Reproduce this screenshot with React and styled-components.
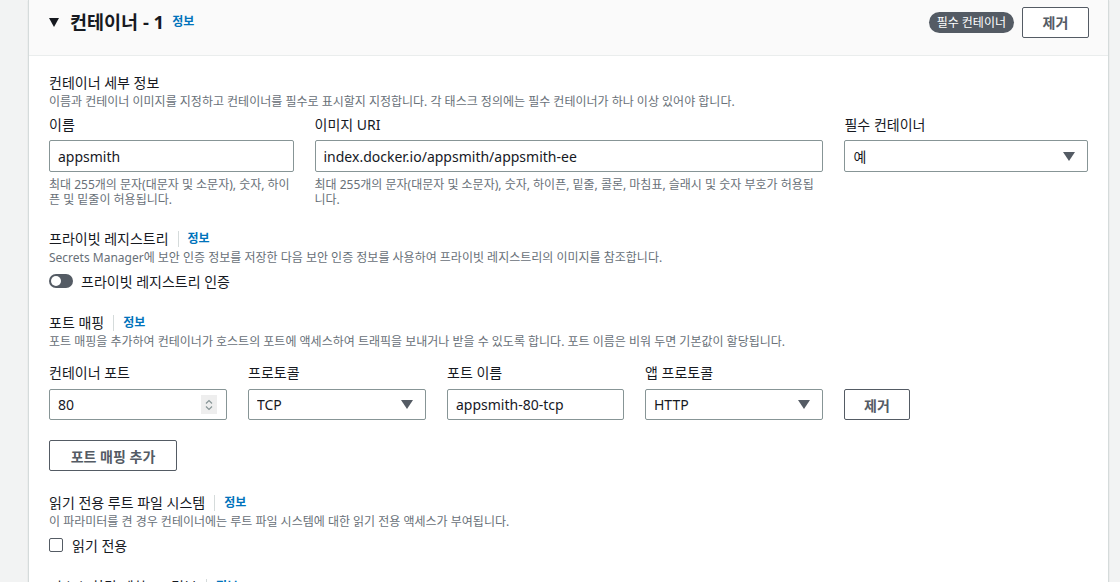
import React from "react";
import styled, { createGlobalStyle } from "styled-components";

const Global = createGlobalStyle`
  html, body { margin: 0; padding: 0; }
  body {
    background: #f2f3f3;
    font-family: "Noto Sans", "Noto Sans CJK KR", sans-serif;
    color: #16191f;
    overflow: hidden;
  }
  * { box-sizing: border-box; }
`;

const Page = styled.div`
  width: 1120px;
  height: 582px;
  padding: 0 11px 0 28px;
  overflow: hidden;
`;

const Card = styled.section`
  background: #fff;
  border-left: 1px solid #d5dbdb;
  border-right: 1px solid #d5dbdb;
  box-shadow: 0 1px 1px rgba(0, 28, 36, 0.15);
  min-height: 700px;
`;

const Header = styled.header`
  display: flex;
  align-items: center;
  height: 56px;
  padding: 0 19px 11px 20px;
  background: #fafafa;
  border-bottom: 1px solid #eaeded;
`;

const Caret = styled.span`
  width: 0;
  height: 0;
  border-left: 5px solid transparent;
  border-right: 5px solid transparent;
  border-top: 9px solid #16191f;
  margin-right: 11px;
  margin-top: 1px;
`;

const Title = styled.h2`
  margin: 0;
  font-size: 18.5px;
  font-weight: 700;
  line-height: 22px;
`;

const InfoLink = styled.a`
  color: #0073bb;
  font-size: 12px;
  font-weight: 700;
  text-decoration: none;
  line-height: 16px;
  margin-left: ${(p) => p.$ml || 0}px;
`;

const Spacer = styled.div`
  flex: 1;
`;

const Badge = styled.span`
  background: #545b64;
  color: #fff;
  font-size: 12px;
  line-height: 21px;
  height: 21px;
  padding: 0 8px;
  border-radius: 11px;
  margin-right: 8px;
`;

const Button = styled.button`
  font-family: inherit;
  background: #fff;
  border: 1px solid #545b64;
  border-radius: 2px;
  color: #545b64;
  font-weight: 700;
  font-size: 14px;
  height: ${(p) => p.$h || 31}px;
  width: ${(p) => p.$w}px;
  padding: 0;
  cursor: pointer;
  flex-shrink: 0;
`;

const Body = styled.div`
  padding: 17px 20px 0 20px;
  display: flex;
  flex-direction: column;
  gap: 22px;
`;

const Section = styled.div`
  display: flex;
  flex-direction: column;
`;

const HeadingRow = styled.div`
  display: flex;
  align-items: center;
  height: 20px;
`;

const Heading = styled.h3`
  margin: 0;
  font-size: 14px;
  font-weight: 400;
  line-height: 20px;
`;

const Sep = styled.span`
  width: 1px;
  height: 16px;
  background: #d5dbdb;
  margin: 0 9px 0 9px;
`;

const Desc = styled.p`
  margin: 1px 0 0 0;
  font-size: 12px;
  line-height: 16px;
  color: #687078;
`;

const Grid = styled.div`
  display: grid;
  grid-template-columns: ${(p) => p.$cols};
  column-gap: 21px;
  margin-top: ${(p) => p.$mt || 0}px;
  align-items: ${(p) => p.$align || "end"};
`;

const Field = styled.div`
  display: flex;
  flex-direction: column;
  min-width: 0;
`;

const Label = styled.label`
  font-size: 14px;
  line-height: 20px;
  margin-bottom: ${(p) => p.$mb || 5}px;
`;

const Box = styled.div`
  display: flex;
  align-items: center;
  height: ${(p) => p.$h || 32}px;
  border: 1px solid #879596;
  border-radius: 2px;
  padding: 0 10px 0 8px;
  font-size: 14px;
  background: #fff;
  color: #16191f;
`;

const BoxText = styled.span`
  flex: 1;
  white-space: nowrap;
  overflow: hidden;
`;

const Arrow = styled.span`
  width: 0;
  height: 0;
  border-left: 6px solid transparent;
  border-right: 6px solid transparent;
  border-top: 9px solid #545b64;
  margin-right: 2px;
`;

const Stepper = styled.span`
  width: 16px;
  height: 19px;
  background: #eeeeee;
  display: flex;
  align-items: center;
  justify-content: center;
  margin-right: -1px;
`;

const Help = styled.div`
  font-size: 12px;
  line-height: 15px;
  color: #687078;
  margin-top: 5px;
  min-height: 30px;
`;

const OptionRow = styled.div`
  display: flex;
  align-items: center;
  height: 20px;
  margin-top: 5px;
  gap: 8px;
  font-size: 14px;
`;

const Toggle = styled.span`
  width: 24px;
  height: 14px;
  border-radius: 7px;
  background: #545b64;
  position: relative;
  &::after {
    content: "";
    position: absolute;
    left: 2px;
    top: 2px;
    width: 10px;
    height: 10px;
    border-radius: 50%;
    background: #fff;
  }
`;

const Check = styled.span`
  width: 14px;
  height: 14px;
  border: 1px solid #545b64;
  border-radius: 2px;
  background: #fff;
  margin-right: 1px;
`;

const ButtonRow = styled.div`
  margin-top: 20px;
`;

const Chevrons = () => (
  <svg width="10" height="14" viewBox="0 0 10 14" fill="none" stroke="#879596" strokeWidth="1.2">
    <path d="M2 5.5 L5 2.5 L8 5.5" />
    <path d="M2 8.5 L5 11.5 L8 8.5" />
  </svg>
);

export default function App() {
  return (
    <>
      <Global />
      <Page>
        <Card>
          <Header>
            <Caret />
            <Title>컨테이너 - 1</Title>
            <InfoLink $ml={8}>정보</InfoLink>
            <Spacer />
            <Badge>필수 컨테이너</Badge>
            <Button $w={67} $h={31}>제거</Button>
          </Header>
          <Body>
            <Section>
              <Heading>컨테이너 세부 정보</Heading>
              <Desc>이름과 컨테이너 이미지를 지정하고 컨테이너를 필수로 표시할지 지정합니다. 각 태스크 정의에는 필수 컨테이너가 하나 이상 있어야 합니다.</Desc>
              <Grid $cols="245fr 510fr 244fr" $mt={5} $align="start">
                <Field>
                  <Label>이름</Label>
                  <Box>
                    <BoxText>appsmith</BoxText>
                  </Box>
                  <Help>최대 255개의 문자(대문자 및 소문자), 숫자, 하이픈 및 밑줄이 허용됩니다.</Help>
                </Field>
                <Field>
                  <Label>이미지 URI</Label>
                  <Box>
                    <BoxText>index.docker.io/appsmith/appsmith-ee</BoxText>
                  </Box>
                  <Help>최대 255개의 문자(대문자 및 소문자), 숫자, 하이픈, 밑줄, 콜론, 마침표, 슬래시 및 숫자 부호가 허용됩니다.</Help>
                </Field>
                <Field>
                  <Label>필수 컨테이너</Label>
                  <Box>
                    <BoxText>예</BoxText>
                    <Arrow />
                  </Box>
                </Field>
              </Grid>
            </Section>

            <Section>
              <HeadingRow>
                <Heading>프라이빗 레지스트리</Heading>
                <Sep />
                <InfoLink>정보</InfoLink>
              </HeadingRow>
              <Desc>Secrets Manager에 보안 인증 정보를 저장한 다음 보안 인증 정보를 사용하여 프라이빗 레지스트리의 이미지를 참조합니다.</Desc>
              <OptionRow>
                <Toggle />
                프라이빗 레지스트리 인증
              </OptionRow>
            </Section>

            <Section>
              <HeadingRow>
                <Heading>포트 매핑</Heading>
                <Sep />
                <InfoLink>정보</InfoLink>
              </HeadingRow>
              <Desc>포트 매핑을 추가하여 컨테이너가 호스트의 포트에 액세스하여 트래픽을 보내거나 받을 수 있도록 합니다. 포트 이름은 비워 두면 기본값이 할당됩니다.</Desc>
              <Grid $cols="178px 178px 177px 178px 66px" $mt={13}>
                <Field>
                  <Label $mb={6}>컨테이너 포트</Label>
                  <Box $h={31}>
                    <BoxText>80</BoxText>
                    <Stepper>
                      <Chevrons />
                    </Stepper>
                  </Box>
                </Field>
                <Field>
                  <Label $mb={6}>프로토콜</Label>
                  <Box $h={31}>
                    <BoxText>TCP</BoxText>
                    <Arrow />
                  </Box>
                </Field>
                <Field>
                  <Label $mb={6}>포트 이름</Label>
                  <Box $h={31}>
                    <BoxText>appsmith-80-tcp</BoxText>
                  </Box>
                </Field>
                <Field>
                  <Label $mb={6}>앱 프로토콜</Label>
                  <Box $h={31}>
                    <BoxText>HTTP</BoxText>
                    <Arrow />
                  </Box>
                </Field>
                <Button $w={66} $h={31}>제거</Button>
              </Grid>
              <ButtonRow>
                <Button $w={128} $h={31}>포트 매핑 추가</Button>
              </ButtonRow>
            </Section>

            <Section>
              <HeadingRow>
                <Heading>읽기 전용 루트 파일 시스템</Heading>
                <Sep />
                <InfoLink>정보</InfoLink>
              </HeadingRow>
              <Desc>이 파라미터를 켠 경우 컨테이너에는 루트 파일 시스템에 대한 읽기 전용 액세스가 부여됩니다.</Desc>
              <OptionRow>
                <Check />
                읽기 전용
              </OptionRow>
            </Section>

            <Section>
              <HeadingRow>
                <Heading>리소스 할당 제한 - 조건부</Heading>
                <Sep />
                <InfoLink>정보</InfoLink>
              </HeadingRow>
            </Section>
          </Body>
        </Card>
      </Page>
    </>
  );
}
